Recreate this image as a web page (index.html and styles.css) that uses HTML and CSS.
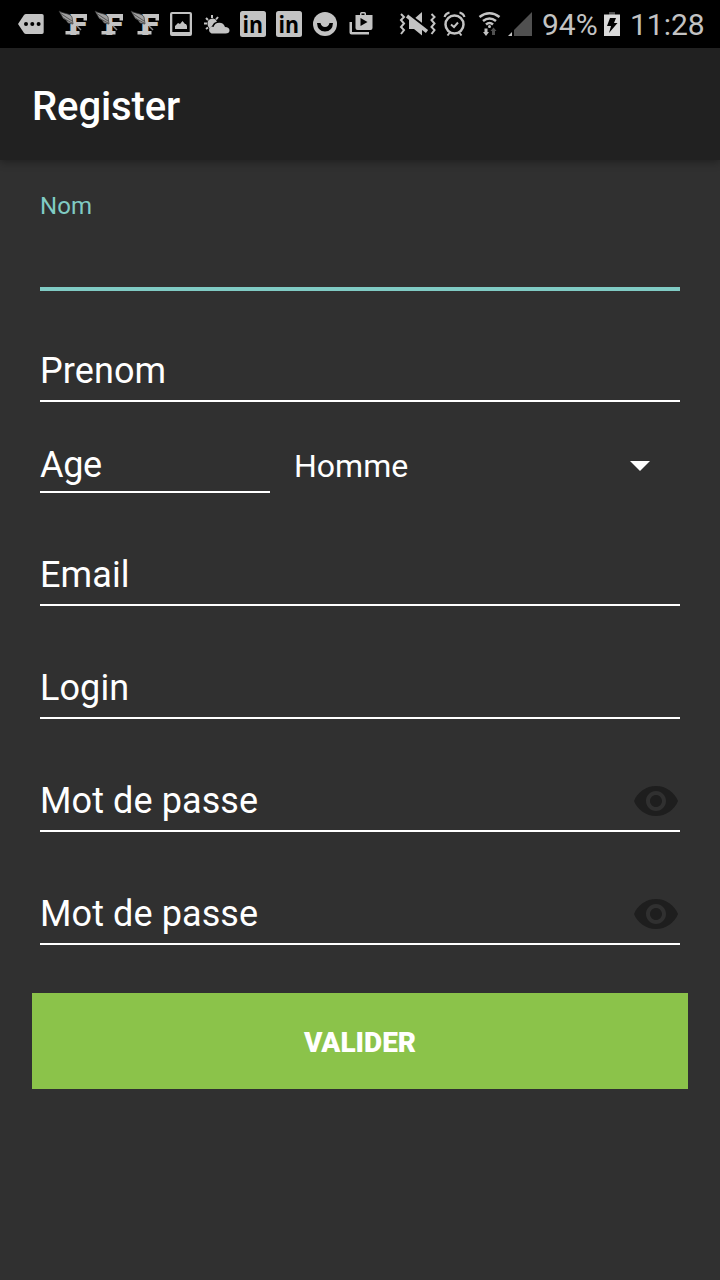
FILE: index.html
```html
<!DOCTYPE html>
<html lang="fr">
<head>
<meta charset="utf-8">
<title>Register</title>
<link rel="stylesheet" href="styles.css">
</head>
<body>
<svg class="defs" aria-hidden="true">
  <symbol id="winged" viewBox="0 0 36 48">
    <text class="slab" x="0" y="0" transform="translate(12.5 34.500) scale(1.12 1)">F</text>
    <path d="M10.500 31h14v3.500h-14zM28.500 14h3.500v6.500h-3.500z"/>
    <path class="wing" d="M4 11c5 3 11 2 13 6l1 7-5-1-2-3-3-2z"/>
    <path class="feather" d="M5 13l12 8M8 18l9 5"/>
    <path class="tail" d="M22 26l4 4"/>
  </symbol>
  <symbol id="linked" viewBox="0 0 36 48">
    <rect x="5" y="11" width="26" height="26" rx="2.5"/>
    <text class="in" x="7.5" y="33" textLength="20.5" lengthAdjust="spacingAndGlyphs">in</text>
  </symbol>
  <symbol id="eye" viewBox="1 4.5 22 15">
    <path d="M12 4.5C7 4.5 2.73 7.61 1 12c1.73 4.39 6 7.5 11 7.5s9.27-3.11 11-7.5c-1.73-4.39-6-7.5-11-7.5zM12 17c-2.76 0-5-2.24-5-5s2.24-5 5-5 5 2.24 5 5-2.24 5-5 5zm0-8c-1.66 0-3 1.34-3 3s1.34 3 3 3 3-1.34 3-3-1.34-3-3-3z"/>
  </symbol>
</svg>

<header class="status">
  <div class="notifications">
    <svg class="first" viewBox="0 0 42 48"><path d="M5 24l6-9q.8-1 2-1h16q1.700 0 1.700 1.700v16.600q0 1.700-1.700 1.700H13q-1.200 0-2-1z"/><g class="cut"><circle cx="13" cy="24" r="2"/><circle cx="19.300" cy="24" r="2"/><circle cx="25.600" cy="24" r="2"/></g></svg>
    <svg><use href="#winged"/></svg>
    <svg><use href="#winged"/></svg>
    <svg><use href="#winged"/></svg>
    <svg viewBox="0 0 36 48"><path fill-rule="evenodd" d="M9 12h18q2 0 2 2v20q0 2-2 2H9q-2 0-2-2V14q0-2 2-2zm.3 2v18h17.400V14z"/><path d="M12 29v-3l3-3 2 1 2.500-3 2.500 3 1 0 1 2v3z"/></svg>
    <svg viewBox="0 0 36 48"><path class="line" d="M13 15v3M5 23.500h3M7 18l2 2M19 17l-2 2.500M7 29l2-1.500"/><path d="M8.500 24a5 5 0 0 1 9.500-2.500l-3 1.500-2 3-2.500 2.500q-2-2-2-4.500z"/><path d="M12.500 33.500a3.700 3.700 0 0 1 0-7q1.500 0 2 .5a6 6 0 0 1 11.500 0q4.500 0 4.500 3.500 0 3-4 3z"/></svg>
    <svg><use href="#linked"/></svg>
    <svg><use href="#linked"/></svg>
    <svg viewBox="0 0 36 48"><circle cx="18" cy="24" r="12"/><path class="cut" d="M10 23h3.500q1 4 4.500 4t4.500-4H26q-.5 8.500-8 8.500T10 23z"/></svg>
    <svg viewBox="0 0 36 48"><path fill-rule="evenodd" d="M12.500 15H17v-1.500q0-1.500 1.500-1.500h3q1.500 0 1.500 1.500V15h6.500v13q0 2-2 2h-13q-2 0-2-2zm6 0h3v-1.500h-3zM17.500 18v8l7-4z"/><path d="M6.500 22H9v10h17v2.500H8.500q-2 0-2-2z"/></svg>
  </div>
  <div class="system">
    <svg class="vibrate" viewBox="0 0 44 48"><path class="line" d="M5 14l3 3-3 3 3 3.500-3 3.500 3 3-3 4M35.500 14l3 3-3 3 3 3.500-3 3.500 3 3-3 4"/><path d="M13 19h5l8-7v23.500L18 29h-5z"/><path class="gap" d="M11 13.500l20 15"/><path class="slash" d="M11 16l20 15.500"/></svg>
    <svg class="alarm" viewBox="0 0 34 48"><circle class="ring" cx="14.500" cy="24.500" r="9"/><path class="line" d="M4.500 17q1-3.500 5-4.500M19.500 12.500q4 1 5 4.500M9.500 33l-2 2.500M19.500 33l2 2.500M11 24.500l3 2.500 4-4.500"/></svg>
    <svg class="wifi" viewBox="0 0 34 48"><path class="arc" d="M5.500 17q10-7.500 20 0M9 21q6.500-5 13 0M12 24.500q3.500-3 7 0"/><circle cx="15.500" cy="26.500" r="1.500"/><path d="M10.500 28.500h3V32H15l-3 4-3-4h1.500z"/><path class="dim" d="M18 35h3v-4h1.500l-3-3.500-3 3.500H18z"/></svg>
    <svg class="signal" viewBox="0 0 24 24"><path class="dim" d="M6 18L24 0v24H6z"/><path d="M0 24l4-4v4z"/></svg>
    <span class="percent">94%</span>
    <svg class="battery" viewBox="0 0 16 24"><path class="dim" d="M5 0h6v3H5z"/><path class="cell" d="M0 2.500h16V24H0z"/><path class="cut" d="M6 6h6l-2 5h3.500L5 21l2-7H3z"/></svg>
    <span class="clock">11:28</span>
  </div>
</header>

<div class="appbar"><h1>Register</h1></div>

<main class="form">
  <div class="field focused"><span>Nom</span></div>
  <div class="field second"><span>Prenom</span></div>
  <div class="row">
    <div class="field age"><span>Age</span></div>
    <div class="spinner"><span>Homme</span><svg viewBox="0 0 20 10"><path d="M0 0h20L10 10z"/></svg></div>
  </div>
  <div class="field"><span>Email</span></div>
  <div class="field"><span>Login</span></div>
  <div class="field"><span>Mot de passe</span><svg class="eye"><use href="#eye"/></svg></div>
  <div class="field"><span>Mot de passe</span><svg class="eye"><use href="#eye"/></svg></div>
</main>
<button class="submit">VALIDER</button>
</body>
</html>
```
FILE: styles.css
```css
* { box-sizing: border-box; }

body {
  margin: 0;
  height: 1280px;
  overflow: hidden;
  background: #303030;
  color: #fff;
  font-family: Roboto, "Liberation Sans", sans-serif;
}

.defs { display: none; }

.status {
  display: flex;
  height: 48px;
  padding-left: 13px;
  background: #000;
  color: #c3c3c3;
  font-size: 30px;
  line-height: 48px;
}
.status svg { display: block; flex: none; overflow: visible; fill: #c3c3c3; }
.notifications { display: flex; width: 383px; }
.notifications svg { width: 36px; height: 48px; }
.notifications .first { width: 42px; }
.system { display: flex; align-items: center; }
.vibrate { width: 44px; height: 48px; }
.alarm, .wifi { width: 34px; height: 48px; }
.signal { width: 24px; height: 24px; }
.battery { width: 16px; height: 24px; }
.percent { width: 62px; margin-left: 10px; padding-top: 1px; }
.clock { margin-left: 10px; padding-top: 1px; white-space: nowrap; }

.status .cut { fill: #000; }
.status .dim { fill: #505050; }
.status .cell { fill: #dadada; }
.line { fill: none; stroke: #c3c3c3; stroke-width: 2; }
.ring { fill: none; stroke: #c3c3c3; stroke-width: 2.5; }
.arc { fill: none; stroke: #c3c3c3; stroke-width: 2.6; }
.gap { stroke: #000; stroke-width: 3; }
.slash { stroke: #c3c3c3; stroke-width: 3.5; }
.slab { font: bold 28px "DejaVu Sans", sans-serif; }
.in { font: bold 23px "Open Sans", sans-serif; fill: #000; }
.wing { fill: #a0a0a0; stroke: #333; stroke-width: 0.7; }
.feather { fill: none; stroke: #555; stroke-width: 1; }
.tail { stroke: #888; stroke-width: 1.5; }

.appbar {
  display: flex;
  align-items: center;
  height: 112px;
  padding: 4px 32px 0;
  background: #212121;
  box-shadow: 0 2px 8px rgba(0, 0, 0, 0.35);
}
.appbar h1 { margin: 0; font-size: 40px; font-weight: 500; letter-spacing: -0.1px; }

.form { padding: 0 40px; }
.field {
  display: flex;
  align-items: flex-end;
  justify-content: space-between;
  height: 113px;
  padding-bottom: 8px;
  border-bottom: 2px solid #fff;
  font-size: 36px;
  letter-spacing: 0.1px;
  line-height: 42px;
}
.field.focused {
  align-items: flex-start;
  height: 131px;
  padding: 32px 0 0;
  border-bottom: 4px solid #80cbc4;
  color: #80cbc4;
  font-size: 24px;
  line-height: 28px;
}
.field.second { height: 111px; }
.row { display: flex; height: 91px; }
.field.age { width: 230px; height: 91px; padding-bottom: 5px; letter-spacing: -0.3px; }
.spinner {
  display: flex;
  flex: 1;
  align-items: center;
  justify-content: space-between;
  padding: 37px 30px 0 24px;
  font-size: 32px;
}
.spinner svg { width: 20px; height: 10px; fill: #fff; }
.eye { width: 44px; height: 30px; margin: 0 2px 6px 0; fill: #1e1e1e; }

.submit {
  display: block;
  width: 656px;
  height: 96px;
  margin: 48px auto 0;
  padding: 3px 0 0;
  border: 0;
  background: #8bc34a;
  color: #fff;
  font: 900 28px Roboto, sans-serif;
}
```
